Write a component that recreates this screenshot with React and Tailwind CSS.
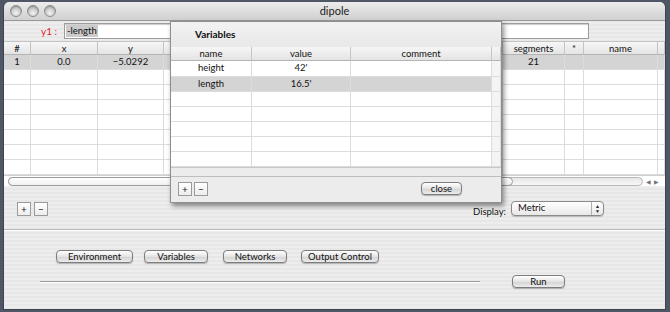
import React from "react";

const font = { fontFamily: "Lato, 'Liberation Sans', sans-serif" };

function Btn({ children, w }) {
  return (
    <div
      className={`h-[13px] ${w} rounded-[4px] border border-[#7d7d7d] bg-[linear-gradient(#ffffff,#e4e4e4_50%,#d2d2d2_51%,#ececec)] shadow-[0_1px_1px_rgba(0,0,0,0.25)] flex items-center justify-center text-[9.5px] leading-none text-[#111]`}
    >
      {children}
    </div>
  );
}

function SqBtn({ children }) {
  return (
    <div className="w-[14px] h-[14px] border border-[#9a9a9a] bg-[linear-gradient(#ffffff,#ededed)] flex items-center justify-center text-[10px] leading-none text-[#222]">
      {children}
    </div>
  );
}

const mainCols = "grid grid-cols-[27px_67px_66px_339px_62px_19px_74px_1fr]";

function MainRow({ cells, sel }) {
  return (
    <div className={`${mainCols} h-[15.33px] border-b border-[#dcdcdc] ${sel ? "bg-[#d4d4d4]" : "bg-white"}`}>
      {cells.map((c, i) => (
        <div key={i} className="border-r border-[#dcdcdc] flex items-center justify-center text-[9.5px] text-[#111]">
          {c}
        </div>
      ))}
    </div>
  );
}

const panelCols = "grid grid-cols-[81px_99px_141px_1fr]";

function PanelRow({ cells, sel, h }) {
  return (
    <div className={`${panelCols} ${h} border-b border-[#dcdcdc] ${sel ? "bg-[#d4d4d4]" : "bg-white"}`}>
      {cells.map((c, i) => (
        <div
          key={i}
          className={`border-r border-[#dcdcdc] flex items-center justify-center text-[9.5px] text-[#111] ${i === 3 ? "bg-[#f4f4f4]" : ""}`}
        >
          {c}
        </div>
      ))}
    </div>
  );
}

export default function App() {
  const stripes =
    "bg-[repeating-linear-gradient(180deg,#ededed_0px,#ededed_2px,#e7e7e7_2px,#e7e7e7_4px)]";
  const empty = ["", "", "", "", "", "", "", ""];
  return (
    <div className="w-[670px] h-[312px] bg-[#4f5666] overflow-hidden" style={font}>
      <div className={`relative ml-[3px] mt-[2px] w-[663px] h-[308px] rounded-t-[6px] ${stripes} border-x border-b border-[#3e4350] flex flex-col overflow-hidden`}>
        {/* title bar */}
        <div className="h-[19px] shrink-0 bg-[linear-gradient(#ececec,#d0d0d0)] border-b border-[#9a9a9a] flex items-center relative">
          <div className="flex gap-[5px] pl-[6px]">
            {[0, 1, 2].map((i) => (
              <div
                key={i}
                className="w-[12px] h-[12px] rounded-full border border-[#8c8c8c] bg-[radial-gradient(circle_at_50%_70%,#f4f4f4,#c4c4c4_60%,#a8a8a8)] shadow-[inset_0_1px_1px_rgba(0,0,0,0.2)]"
              />
            ))}
          </div>
          <div className="absolute inset-0 flex items-center justify-center text-[11px] text-[#222]">dipole</div>
        </div>

        {/* toolbar */}
        <div className="h-[21px] shrink-0 flex items-center border-b border-[#c4c4c4]">
          <div className="w-[60px] flex justify-end pr-[7px] text-[10px] text-[#e0262b]">y1 :</div>
          <div className="w-[525px] h-[16px] bg-white border border-[#9c9c9c] shadow-[inset_0_1px_1px_rgba(0,0,0,0.2)] flex items-center pl-[1px]">
            <span className="bg-[#cbcbcb] text-[9.5px] text-[#111] px-[1px] leading-[12px]">-length</span>
          </div>
        </div>

        {/* main table */}
        <div className="h-[133px] shrink-0 bg-white flex flex-col">
          <div className={`${mainCols} h-[13px] bg-[linear-gradient(#f6f6f6,#e4e4e4)] border-b border-[#b4b4b4]`}>
            {["#", "x", "y", "", "segments", "*", "name", ""].map((c, i) => (
              <div key={i} className="border-r border-[#c4c4c4] flex items-center justify-center text-[9.5px] text-[#111]">
                {c}
              </div>
            ))}
          </div>
          <MainRow sel cells={["1", "0.0", "\u22125.0292", "", "21", "", "", ""]} />
          {[0, 1, 2, 3, 4, 5, 6].map((r) => (
            <MainRow key={r} cells={empty} />
          ))}
        </div>

        {/* scrollbar */}
        <div className="h-[11px] shrink-0 bg-white border-t border-[#cfcfcf] flex items-center pl-[4px] pr-[6px]">
          <div className="flex-1 h-[9px] rounded-full bg-[linear-gradient(#e6e6e6,#f8f8f8)] border border-[#b8b8b8] relative">
            <div className="absolute left-[-1px] top-[-1px] w-[505px] h-[9px] rounded-full border border-[#9c9c9c] bg-[linear-gradient(#ffffff,#f0f0f0)]" />
          </div>
          <div className="flex text-[6px] text-[#777] gap-[3px] pl-[3px]">
            <span>◀</span>
            <span>▶</span>
          </div>
        </div>

        {/* controls under table */}
        <div className="h-[44px] shrink-0 flex items-center px-[13px] border-b border-[#b8b8b8]">
          <div className="flex gap-[3px] mt-[2px]">
            <SqBtn>+</SqBtn>
            <SqBtn>−</SqBtn>
          </div>
          <div className="ml-auto flex items-center mr-[48px] mt-[2px]">
            <span className="text-[9.5px] text-[#111] mr-[5px] mt-[8px]">Display:</span>
            <div className="w-[93px] h-[15px] rounded-[4px] border border-[#8a8a8a] bg-[linear-gradient(#ffffff,#e8e8e8)] shadow-[0_1px_1px_rgba(0,0,0,0.2)] flex items-center">
              <span className="flex-1 pl-[6px] text-[9.5px] text-[#111]">Metric</span>
              <div className="w-[12px] h-full border-l border-[#b0b0b0] flex flex-col items-center justify-center text-[5px] leading-[5px] text-[#222]">
                <span>▲</span>
                <span>▼</span>
              </div>
            </div>
          </div>
        </div>
        <div className="h-px shrink-0 bg-white" />

        {/* bottom section */}
        <div className="flex-1 flex flex-col">
          <div className="flex items-center mt-[19px] pl-[52px]">
            <Btn w="w-[77px]">Environment</Btn>
            <div className="w-[11px]" />
            <Btn w="w-[64px]">Variables</Btn>
            <div className="w-[15px]" />
            <Btn w="w-[64px]">Networks</Btn>
            <div className="w-[14px]" />
            <Btn w="w-[78px]">Output Control</Btn>
          </div>
          <div className="flex items-center mt-[12px]">
            <div className="ml-[36px] w-[440px] h-px bg-[#9a9a9a] border-b border-white box-content" />
            <div className="ml-[32px]">
              <Btn w="w-[53px]">Run</Btn>
            </div>
          </div>
        </div>

        {/* Variables panel */}
        <div className="absolute left-[166px] top-[19px] w-[332px] h-[182px] bg-[#ececec] border border-[#8e8e8e] shadow-[2px_3px_5px_rgba(0,0,0,0.45)] flex flex-col">
          <div className="h-[25px] shrink-0 flex items-center pl-[24px] text-[10px] font-bold text-[#111] bg-[linear-gradient(#f2f2f2,#e8e8e8)]">
            Variables
          </div>
          <div className="h-[121px] shrink-0 bg-white flex flex-col border-b border-[#c8c8c8]">
            <div className={`${panelCols} h-[14px] bg-[linear-gradient(#f6f6f6,#e4e4e4)] border-b border-[#b4b4b4]`}>
              {["name", "value", "comment", ""].map((c, i) => (
                <div key={i} className="border-r border-[#c4c4c4] flex items-center justify-center text-[9.5px] text-[#111]">
                  {c}
                </div>
              ))}
            </div>
            <PanelRow h="h-[16px]" cells={["height", "42'", "", ""]} />
            <PanelRow h="h-[15px]" sel cells={["length", "16.5'", "", ""]} />
            {[0, 1, 2, 3, 4].map((r) => (
              <PanelRow key={r} h="h-[15px]" cells={["", "", "", ""]} />
            ))}
          </div>
          <div className="h-[9px] shrink-0 border-b border-[#bdbdbd]" />
          <div className="flex-1 flex items-center px-[7px] pb-[2px]">
            <div className="flex gap-[2px]">
              <SqBtn>+</SqBtn>
              <SqBtn>−</SqBtn>
            </div>
            <div className="ml-auto mr-[32px]">
              <Btn w="w-[41px]">close</Btn>
            </div>
          </div>
        </div>
      </div>
    </div>
  );
}
